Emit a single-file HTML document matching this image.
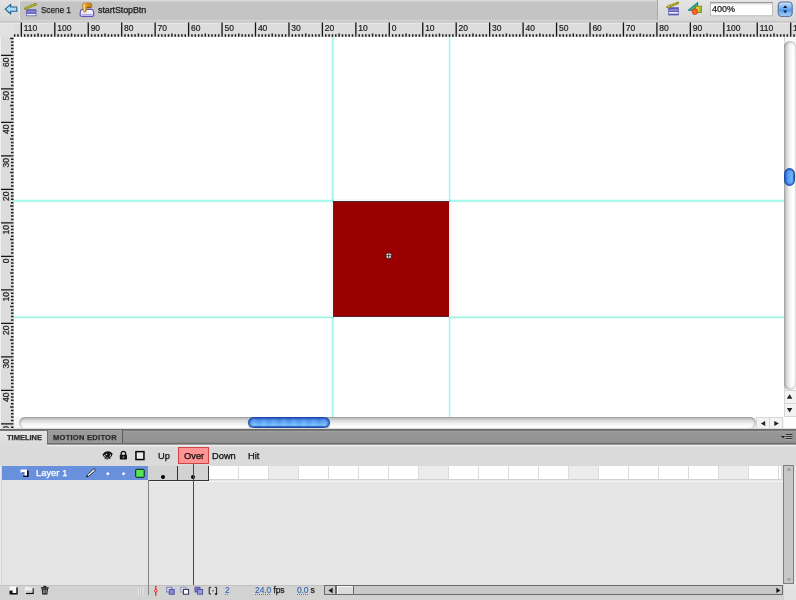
<!DOCTYPE html>
<html lang="en">
<head>
<meta charset="utf-8">
<title>startStopBtn</title>
<style>
html,body{margin:0;padding:0;}
body{width:796px;height:600px;overflow:hidden;position:relative;background:#e4e4e4;
  font-family:"Liberation Sans",sans-serif;font-size:9px;color:#1a1a1a;}
.abs{position:absolute;display:block;}
.t{position:absolute;white-space:nowrap;line-height:1;will-change:transform;-webkit-text-stroke:0.25px currentColor;}
.rl{stroke:#202020;stroke-width:0.2px;}
svg.wc{will-change:transform;}
/* top bar */
#topbar{left:0;top:0;width:796px;height:22.6px;background:linear-gradient(#e2e2e2 0,#c4c4c4 2.4px,#c4c4c4 100%);}
#tb-left{left:0;top:0;width:20px;height:20px;background:linear-gradient(#e2e2e2,#d6d6d6);border-right:1px solid #e6e6e6;box-sizing:border-box;}
#tb-right{left:657px;top:0;width:139px;height:20px;background:linear-gradient(#e4e4e4,#d8d8d8);border-left:1px solid #a8a8a8;box-sizing:border-box;}
#tb-line{left:0;top:20px;width:796px;height:4px;background:linear-gradient(#d7d7d7 0,#d7d7d7 1px,#c6c6c6 1px,#c6c6c6 2px,#d0d0d0 2px,#d0d0d0 3px,#e6e6e6 3px,#e6e6e6 4px);}
/* rulers */
#rtop{left:0;top:24px;width:796px;height:12.7px;background:#dddddd;}
#rcorner{left:0;top:24px;width:13.5px;height:12.7px;background:#e2e2e2;}
#rleft{left:0;top:36.7px;width:13.5px;height:392.6px;background:#dcdcdc;border-left:1px solid #f0f0f0;box-sizing:border-box;}
/* stage */
#stage{left:13.5px;top:36.7px;width:770.5px;height:380.3px;background:#fff;}
.guide{background:#74f4ea;}
#sq{left:334px;top:202px;width:114.5px;height:113.8px;background:#9b0000;border-top:1px solid #8c0808;box-sizing:border-box;}
/* stage scrollbars */
#vsb{left:783.7px;top:36.7px;width:12.3px;height:380.3px;background:#f8f8f8;border-left:1px solid #d4d4d4;box-sizing:border-box;}
#vtrack{left:783.9px;top:41.3px;width:12.1px;height:348.4px;border-radius:6px;
  background:linear-gradient(90deg,#bababa 0%,#b8b8b8 5%,#dcdcdc 27%,#f3f3f3 48%,#fefefe 68%,#ffffff 85%,#f2f2f2 100%);box-shadow:inset 0 1.5px 2px rgba(0,0,0,.22),inset 0 -1.5px 2px rgba(0,0,0,.18);}
#vthumb{left:783.9px;top:167.7px;width:11.2px;height:18.6px;border-radius:5.6px;border:1px solid #1c48aa;box-sizing:border-box;
  background:linear-gradient(90deg,#3c78dc 0%,#5aa0f2 40%,#62acf6 60%,#7cc2fc 85%,#5a9cec 100%);box-shadow:inset 0 0 1.6px 0.9px #2456bc;}
.abox{background:#f3f3f3;box-sizing:border-box;}
#hsb{left:13.5px;top:417px;width:770.5px;height:11.6px;background:#f6f6f6;}
#htrack{left:18.8px;top:416.9px;width:737.2px;height:11.7px;border-radius:6px;
  background:linear-gradient(180deg,#b8b8b8 0%,#b6b6b6 6%,#d8d8d8 27%,#f0f0f0 54%,#fefefe 80%,#ffffff 100%);box-shadow:inset 1.5px 0 2px rgba(0,0,0,.2),inset -1.5px 0 2px rgba(0,0,0,.2);}
#hthumb{left:247.8px;top:416.9px;width:82px;height:11.6px;border-radius:5.8px;border:1px solid #1c48aa;box-sizing:border-box;
  background:repeating-linear-gradient(90deg,rgba(255,255,255,0) 0,rgba(255,255,255,.16) 5px,rgba(255,255,255,0) 10px),linear-gradient(180deg,#3c78dc 0%,#4c92ee 35%,#5aaaf6 60%,#88ceff 88%,#62acf4 100%);box-shadow:inset 0 0 1.6px 0.9px #2456bc,0 1px 1px rgba(60,60,60,.55);}
#corner{left:784px;top:417px;width:12px;height:12px;background:#fff;}
/* timeline */
#tl-dark{left:0;top:428px;width:796px;height:19px;background:linear-gradient(180deg,#dcdcdc 0px,#dcdcdc 1px,#6c6c6c 1px,#6c6c6c 2px,#777777 2px,#777777 3px,#9f9f9f 3px,#9f9f9f 4px,#979797 4px,#979797 5px,#979797 5px,#979797 6px,#979797 6px,#979797 7px,#959595 7px,#959595 8px,#959595 8px,#959595 9px,#959595 9px,#959595 10px,#959595 10px,#959595 11px,#939393 11px,#939393 12px,#939393 12px,#939393 13px,#939393 13px,#939393 14px,#8a8a8a 14px,#8a8a8a 15px,#6e6e6e 15px,#6e6e6e 16px,#9c9c9c 16px,#9c9c9c 17px,#efefef 17px,#efefef 18px,#e2e2e2 18px,#e2e2e2 19px);}
#tabbar{display:none;}
#tab1{left:0;top:431px;width:47px;height:16px;background:linear-gradient(#e4e4e4,#dadada);}
#tab2{left:47px;top:430px;width:76px;height:13.4px;background:linear-gradient(#a2a2a2 0,#a2a2a2 1px,#9b9b9b 1px,#999999 100%);border-right:1px solid #5c5c5c;border-left:1px solid #6e6e6e;box-sizing:border-box;}
#tl-head{left:0;top:447px;width:796px;height:18.8px;background:#dadada;}
#tl-body{left:0;top:465.8px;width:796px;height:119.2px;background:#e6e6e6;}
#tl-layers{left:0;top:465.8px;width:148.2px;height:119.2px;background:#e5e5e5;border-left:1px solid #e9e9e9;box-shadow:inset 1px 0 0 #d6d6d6;box-sizing:border-box;}
#tl-sep{left:148.1px;top:480px;width:1px;height:115.3px;background:#848484;}
#layer{left:2.2px;top:465.5px;width:146.1px;height:14.5px;background:#6990dd;}
#tl-foot{left:0;top:585px;width:796px;height:15px;background:#d2d2d2;border-top:1px solid #c2c2c2;box-sizing:border-box;}
.cell{top:465.6px;height:14.7px;background:#fff;border-right:1px solid #dcdcdc;border-bottom:1px solid #d0d0d0;box-sizing:border-box;}
.cell.sh{background:#ececec;}
.kf{top:465.8px;height:15.2px;background:#d2d2d2;border:1px solid #333;border-top:none;box-sizing:border-box;}
.dot{width:4.2px;height:4.2px;border-radius:50%;background:#000;}
#over{left:178.1px;top:447.3px;width:30.7px;height:16.8px;background:#ff9494;border:1px solid #d24444;box-sizing:border-box;}
#playhead{left:192.9px;top:464px;width:1.1px;height:121px;background:#cc1010;}
#tvsb{left:783.3px;top:465.2px;width:11px;height:119.2px;background:#c7c7c7;border:1.1px solid #7e7e7e;box-sizing:border-box;}
#thsb{left:324.3px;top:585.2px;width:459.2px;height:10.3px;background:#c9c9c9;border:1px solid #6a6a6a;box-sizing:border-box;}
#thsb-l{left:324.3px;top:585.2px;width:12.2px;height:10.3px;background:#c9c9c9;border:1px solid #6a6a6a;box-sizing:border-box;}
.blue{color:#2f66b0;-webkit-text-stroke:0.1px #2f66b0;text-decoration:underline dotted #4a7cc0;text-decoration-thickness:0.8px;text-underline-offset:1.2px;}
</style>
</head>
<body>
<!-- top bar -->
<div id="topbar" class="abs"></div>
<div id="tb-left" class="abs"></div>
<div id="tb-right" class="abs"></div>
<div id="tb-line" class="abs"></div>
<svg class="abs" style="left:0;top:0" width="160" height="20" viewBox="0 0 160 20">
  <!-- back arrow -->
  <path d="M5.2 9.1L10.7 4.3V7H16.8V11.3H10.7V14L5.2 9.1Z" fill="#a6dcf8" stroke="#1d5f92" stroke-width="1.1" stroke-linejoin="round"/>
  <!-- clapper -->
  <g id="clap">
    <rect x="26.2" y="9.3" width="10.2" height="6.9" fill="#5c5ab6"/>
    <rect x="27.3" y="10.8" width="8" height="1.7" fill="#8e8cd6"/>
    <rect x="26.9" y="13.9" width="8.8" height="1.5" fill="#f4f4ff"/>
    <path d="M25.4 8.6L35.6 4.3" stroke="#8e8e1c" stroke-width="2.7" stroke-linecap="round"/>
    <path d="M25.8 8.3L35.3 4.3" stroke="#cfcf4a" stroke-width="1.2" stroke-dasharray="1.8 1.3"/>
  </g>
  <!-- button symbol icon -->
  <path d="M82.4 9.4H91.4Q93.2 9.4 93.5 11.4L93.8 14.2Q93.8 16.4 91.6 16.4H82.2Q80 16.4 80.1 14.2L80.4 11.4Q80.7 9.4 82.4 9.4Z" fill="#f3f0ff" stroke="#5e56b8" stroke-width="1.2"/>
  <path d="M81.5 14.6H92.5" stroke="#b7a8ee" stroke-width="1.6"/>
  <defs><linearGradient id="hnd" x1="0" y1="0" x2="1" y2="0.4"><stop offset="0" stop-color="#f6cf58"/><stop offset="0.5" stop-color="#e2a028"/><stop offset="1" stop-color="#bf7a18"/></linearGradient></defs>
  <path d="M84.2 3L85.6 2.7L86.6 3.3L87.8 2.7L89 3.3L90.4 2.8Q91.8 3 91.8 4.6V6.2Q91.8 7.8 90.2 7.8H86.6L86.3 11.2L84.6 12.5L83.1 10.9L82.4 5Q82.4 3.4 84.2 3Z" fill="url(#hnd)" stroke="#9c5c12" stroke-width="0.55"/>
  <path d="M86.8 7.3H91" stroke="#8a480c" stroke-width="1"/>
  <path d="M84 4.4L84.6 10.6" stroke="#fbe694" stroke-width="0.9"/>
  <path d="M86.7 3.6V5.4M88.9 3.6V5.4" stroke="#a86414" stroke-width="0.5"/>
</svg>
<span class="t" id="txScene" style="left:41.2px;top:6.2px;font-size:9px;transform:scaleX(0.905);transform-origin:0 0">Scene 1</span>
<span class="t" id="txBtn" style="left:98.2px;top:6.2px;font-size:9px;letter-spacing:-0.12px">startStopBtn</span>
<svg class="abs" style="left:660px;top:0" width="136" height="20" viewBox="660 0 136 20">
  <!-- clapper 2 -->
  <rect x="668.2" y="7.2" width="10.6" height="8.2" fill="#5c5ab6"/>
  <rect x="669.3" y="9.2" width="8.4" height="1.8" fill="#8e8cd6"/>
  <rect x="668.9" y="12" width="9.2" height="1.6" fill="#f4f4ff"/>
  <path d="M667.6 6.9L677.7 2.9" stroke="#8e8e1c" stroke-width="2.7" stroke-linecap="round"/>
  <path d="M668 6.6L677.4 2.9" stroke="#cfcf4a" stroke-width="1.2" stroke-dasharray="1.8 1.3"/>
  <!-- symbols icon -->
  <path d="M688.4 10.2L697.6 2.6V10.6Z" fill="#3cb878" stroke="#1f8484" stroke-width="1.1" stroke-linejoin="round"/>
  <rect x="695.6" y="6.2" width="6" height="6.3" fill="#e2d02a" stroke="#9a6a14" stroke-width="0.8"/>
  <rect x="699.2" y="6.8" width="2" height="5.2" fill="#8cc63c"/>
  <circle cx="694.9" cy="11.6" r="2.8" fill="#f2682a" stroke="#c2361a" stroke-width="0.8"/>
  <!-- zoom field -->
  <rect x="710.6" y="2.8" width="62" height="13" fill="#fff" stroke="#b4b4b4" stroke-width="0.9"/>
  <path d="M710.3 2.7H772.9" stroke="#8e8e8e" stroke-width="1"/><path d="M711 3.8H772.2" stroke="#dcdcdc" stroke-width="1.2"/>
  <!-- stepper -->
  <defs><linearGradient id="stp" x1="0" y1="0" x2="0" y2="1"><stop offset="0" stop-color="#d2e6fb"/><stop offset="0.45" stop-color="#72acf1"/><stop offset="0.55" stop-color="#5598ea"/><stop offset="1" stop-color="#acd8fc"/></linearGradient></defs>
  <rect x="778.2" y="2" width="14" height="14.4" rx="3" fill="url(#stp)" stroke="#4a5e86" stroke-width="0.9"/>
  <path d="M783.1 8L785.2 5.2L787.3 8ZM783.1 10.4L785.2 13.2L787.3 10.4Z" fill="#0c1c3c"/>
</svg>
<span class="t" id="txZoom" style="left:712.2px;top:4.5px;font-size:9px">400%</span>


<!-- rulers -->
<div id="rtop" class="abs"></div>
<div id="rleft" class="abs"></div>
<div id="rcorner" class="abs"></div>

<!-- stage -->
<div id="stage" class="abs"></div>
<div class="abs" style="left:13.5px;top:199px;width:770.5px;height:4px;background:linear-gradient(180deg,#eafdfa 0px,#eafdfa 1px,#a6f8ea 1px,#a6f8ea 2px,#aefaee 2px,#aefaee 3px,#f2fffc 3px,#f2fffc 4px)"></div>
<div class="abs" style="left:13.5px;top:315px;width:770.5px;height:4px;background:linear-gradient(180deg,#f2fdfc 0px,#f2fdfc 1px,#c6fbf0 1px,#c6fbf0 2px,#a6f0e0 2px,#a6f0e0 3px,#eefcf8 3px,#eefcf8 4px)"></div>
<div class="abs" style="mix-blend-mode:multiply;left:331px;top:36.7px;width:4px;height:380.3px;background:linear-gradient(90deg,#e8fbfb 0px,#e8fbfb 1px,#acf0ec 1px,#acf0ec 2px,#b8fdfb 2px,#b8fdfb 3px,#f2ffff 3px,#f2ffff 4px)"></div>
<div class="abs" style="mix-blend-mode:multiply;left:448px;top:36.7px;width:4px;height:380.3px;background:linear-gradient(90deg,#effefe 0px,#effefe 1px,#b2ecec 1px,#b2ecec 2px,#dcfdfd 2px,#dcfdfd 3px,#f8ffff 3px,#f8ffff 4px)"></div>
<div class="abs" style="left:334px;top:199px;width:115px;height:2px;background:#f3f9fd"></div>
<div class="abs" style="left:334px;top:316.6px;width:115px;height:2.4px;background:#f3fbfb"></div>
<div class="abs" style="left:331px;top:202px;width:2px;height:114.6px;background:#f1f8fd"></div>
<div class="abs" style="left:449.4px;top:202px;width:2.6px;height:114.6px;background:#f6f6fa"></div>
<div class="abs" style="left:333px;top:201px;width:116.4px;height:115.6px;background:#54282e"></div>
<div id="sq" class="abs"></div>
<svg class="abs" style="left:383px;top:250px" width="12" height="12" viewBox="0 0 12 12">
  <circle cx="5.75" cy="5.75" r="3" fill="#fff" stroke="#300404" stroke-width="0.8"/>
  <path d="M5.75 3v5.5M3 5.75h5.5" stroke="#000" stroke-width="0.75" fill="none"/>
</svg>
<svg class="abs wc" style="left:0;top:21px" width="796" height="16" viewBox="0 0 796 16">
<path d="M14.66 13.20v2.50M18.00 13.20v2.50M24.69 13.20v2.50M28.04 13.20v2.50M31.38 13.20v2.50M34.73 13.20v2.50M38.07 12.40v3.30M41.42 13.20v2.50M44.76 13.20v2.50M48.11 13.20v2.50M51.45 13.20v2.50M58.14 13.20v2.50M61.49 13.20v2.50M64.83 13.20v2.50M68.18 13.20v2.50M71.52 12.40v3.30M74.87 13.20v2.50M78.21 13.20v2.50M81.56 13.20v2.50M84.90 13.20v2.50M91.59 13.20v2.50M94.94 13.20v2.50M98.29 13.20v2.50M101.63 13.20v2.50M104.97 12.40v3.30M108.32 13.20v2.50M111.66 13.20v2.50M115.01 13.20v2.50M118.35 13.20v2.50M125.05 13.20v2.50M128.39 13.20v2.50M131.74 13.20v2.50M135.08 13.20v2.50M138.43 12.40v3.30M141.77 13.20v2.50M145.11 13.20v2.50M148.46 13.20v2.50M151.80 13.20v2.50M158.50 13.20v2.50M161.84 13.20v2.50M165.19 13.20v2.50M168.53 13.20v2.50M171.88 12.40v3.30M175.22 13.20v2.50M178.56 13.20v2.50M181.91 13.20v2.50M185.25 13.20v2.50M191.94 13.20v2.50M195.29 13.20v2.50M198.63 13.20v2.50M201.98 13.20v2.50M205.32 12.40v3.30M208.67 13.20v2.50M212.01 13.20v2.50M215.36 13.20v2.50M218.71 13.20v2.50M225.39 13.20v2.50M228.74 13.20v2.50M232.09 13.20v2.50M235.43 13.20v2.50M238.77 12.40v3.30M242.12 13.20v2.50M245.47 13.20v2.50M248.81 13.20v2.50M252.16 13.20v2.50M258.85 13.20v2.50M262.19 13.20v2.50M265.53 13.20v2.50M268.88 13.20v2.50M272.23 12.40v3.30M275.57 13.20v2.50M278.91 13.20v2.50M282.26 13.20v2.50M285.61 13.20v2.50M292.30 13.20v2.50M295.64 13.20v2.50M298.99 13.20v2.50M302.33 13.20v2.50M305.68 12.40v3.30M309.02 13.20v2.50M312.37 13.20v2.50M315.71 13.20v2.50M319.06 13.20v2.50M325.75 13.20v2.50M329.09 13.20v2.50M332.44 13.20v2.50M335.78 13.20v2.50M339.12 12.40v3.30M342.47 13.20v2.50M345.81 13.20v2.50M349.16 13.20v2.50M352.50 13.20v2.50M359.19 13.20v2.50M362.54 13.20v2.50M365.88 13.20v2.50M369.23 13.20v2.50M372.57 12.40v3.30M375.92 13.20v2.50M379.26 13.20v2.50M382.61 13.20v2.50M385.95 13.20v2.50M392.65 13.20v2.50M395.99 13.20v2.50M399.34 13.20v2.50M402.68 13.20v2.50M406.03 12.40v3.30M409.37 13.20v2.50M412.72 13.20v2.50M416.06 13.20v2.50M419.41 13.20v2.50M426.10 13.20v2.50M429.44 13.20v2.50M432.79 13.20v2.50M436.13 13.20v2.50M439.48 12.40v3.30M442.82 13.20v2.50M446.17 13.20v2.50M449.51 13.20v2.50M452.86 13.20v2.50M459.55 13.20v2.50M462.89 13.20v2.50M466.24 13.20v2.50M469.58 13.20v2.50M472.93 12.40v3.30M476.27 13.20v2.50M479.62 13.20v2.50M482.96 13.20v2.50M486.31 13.20v2.50M493.00 13.20v2.50M496.34 13.20v2.50M499.69 13.20v2.50M503.03 13.20v2.50M506.38 12.40v3.30M509.72 13.20v2.50M513.07 13.20v2.50M516.41 13.20v2.50M519.75 13.20v2.50M526.45 13.20v2.50M529.79 13.20v2.50M533.13 13.20v2.50M536.48 13.20v2.50M539.83 12.40v3.30M543.17 13.20v2.50M546.51 13.20v2.50M549.86 13.20v2.50M553.21 13.20v2.50M559.89 13.20v2.50M563.24 13.20v2.50M566.59 13.20v2.50M569.93 13.20v2.50M573.28 12.40v3.30M576.62 13.20v2.50M579.97 13.20v2.50M583.31 13.20v2.50M586.65 13.20v2.50M593.35 13.20v2.50M596.69 13.20v2.50M600.04 13.20v2.50M603.38 13.20v2.50M606.73 12.40v3.30M610.07 13.20v2.50M613.41 13.20v2.50M616.76 13.20v2.50M620.11 13.20v2.50M626.80 13.20v2.50M630.14 13.20v2.50M633.49 13.20v2.50M636.83 13.20v2.50M640.17 12.40v3.30M643.52 13.20v2.50M646.87 13.20v2.50M650.21 13.20v2.50M653.56 13.20v2.50M660.25 13.20v2.50M663.59 13.20v2.50M666.94 13.20v2.50M670.28 13.20v2.50M673.62 12.40v3.30M676.97 13.20v2.50M680.32 13.20v2.50M683.66 13.20v2.50M687.01 13.20v2.50M693.70 13.20v2.50M697.04 13.20v2.50M700.38 13.20v2.50M703.73 13.20v2.50M707.08 12.40v3.30M710.42 13.20v2.50M713.77 13.20v2.50M717.11 13.20v2.50M720.46 13.20v2.50M727.14 13.20v2.50M730.49 13.20v2.50M733.84 13.20v2.50M737.18 13.20v2.50M740.53 12.40v3.30M743.87 13.20v2.50M747.22 13.20v2.50M750.56 13.20v2.50M753.90 13.20v2.50M760.60 13.20v2.50M763.94 13.20v2.50M767.29 13.20v2.50M770.63 13.20v2.50M773.98 12.40v3.30M777.32 13.20v2.50M780.67 13.20v2.50M784.01 13.20v2.50M787.36 13.20v2.50M794.05 13.20v2.50" stroke="#1c1c1c" stroke-width="1.5" fill="none"/>
<path d="M21.35 1.6V15.7M54.80 1.6V15.7M88.25 1.6V15.7M121.70 1.6V15.7M155.15 1.6V15.7M188.60 1.6V15.7M222.05 1.6V15.7M255.50 1.6V15.7M288.95 1.6V15.7M322.40 1.6V15.7M355.85 1.6V15.7M389.30 1.6V15.7M422.75 1.6V15.7M456.20 1.6V15.7M489.65 1.6V15.7M523.10 1.6V15.7M556.55 1.6V15.7M590.00 1.6V15.7M623.45 1.6V15.7M656.90 1.6V15.7M690.35 1.6V15.7M723.80 1.6V15.7M757.25 1.6V15.7M790.70 1.6V15.7" stroke="#141414" stroke-width="1.3" fill="none"/>
<g font-family="'Liberation Sans',sans-serif" font-size="8.5" fill="#202020" class="rl"><text x="23.75" y="10.1">110</text><text x="57.20" y="10.1">100</text><text x="90.65" y="10.1">90</text><text x="124.10" y="10.1">80</text><text x="157.55" y="10.1">70</text><text x="191.00" y="10.1">60</text><text x="224.45" y="10.1">50</text><text x="257.90" y="10.1">40</text><text x="291.35" y="10.1">30</text><text x="324.80" y="10.1">20</text><text x="358.25" y="10.1">10</text><text x="391.70" y="10.1">0</text><text x="425.15" y="10.1">10</text><text x="458.60" y="10.1">20</text><text x="492.05" y="10.1">30</text><text x="525.50" y="10.1">40</text><text x="558.95" y="10.1">50</text><text x="592.40" y="10.1">60</text><text x="625.85" y="10.1">70</text><text x="659.30" y="10.1">80</text><text x="692.75" y="10.1">90</text><text x="726.20" y="10.1">100</text><text x="759.65" y="10.1">110</text><text x="793.10" y="10.1">120</text></g>
</svg>
<svg class="abs wc" style="left:0;top:36px" width="14" height="394" viewBox="0 0 14 394">
<path d="M10.20 2.55h3.30M11.00 5.90h2.50M11.00 9.25h2.50M11.00 12.60h2.50M11.00 15.95h2.50M11.00 22.65h2.50M11.00 26.00h2.50M11.00 29.35h2.50M11.00 32.70h2.50M10.20 36.05h3.30M11.00 39.40h2.50M11.00 42.75h2.50M11.00 46.10h2.50M11.00 49.45h2.50M11.00 56.15h2.50M11.00 59.50h2.50M11.00 62.85h2.50M11.00 66.20h2.50M10.20 69.55h3.30M11.00 72.90h2.50M11.00 76.25h2.50M11.00 79.60h2.50M11.00 82.95h2.50M11.00 89.65h2.50M11.00 93.00h2.50M11.00 96.35h2.50M11.00 99.70h2.50M10.20 103.05h3.30M11.00 106.40h2.50M11.00 109.75h2.50M11.00 113.10h2.50M11.00 116.45h2.50M11.00 123.15h2.50M11.00 126.50h2.50M11.00 129.85h2.50M11.00 133.20h2.50M10.20 136.55h3.30M11.00 139.90h2.50M11.00 143.25h2.50M11.00 146.60h2.50M11.00 149.95h2.50M11.00 156.65h2.50M11.00 160.00h2.50M11.00 163.35h2.50M11.00 166.70h2.50M10.20 170.05h3.30M11.00 173.40h2.50M11.00 176.75h2.50M11.00 180.10h2.50M11.00 183.45h2.50M11.00 190.15h2.50M11.00 193.50h2.50M11.00 196.85h2.50M11.00 200.20h2.50M10.20 203.55h3.30M11.00 206.90h2.50M11.00 210.25h2.50M11.00 213.60h2.50M11.00 216.95h2.50M11.00 223.65h2.50M11.00 227.00h2.50M11.00 230.35h2.50M11.00 233.70h2.50M10.20 237.05h3.30M11.00 240.40h2.50M11.00 243.75h2.50M11.00 247.10h2.50M11.00 250.45h2.50M11.00 257.15h2.50M11.00 260.50h2.50M11.00 263.85h2.50M11.00 267.20h2.50M10.20 270.55h3.30M11.00 273.90h2.50M11.00 277.25h2.50M11.00 280.60h2.50M11.00 283.95h2.50M11.00 290.65h2.50M11.00 294.00h2.50M11.00 297.35h2.50M11.00 300.70h2.50M10.20 304.05h3.30M11.00 307.40h2.50M11.00 310.75h2.50M11.00 314.10h2.50M11.00 317.45h2.50M11.00 324.15h2.50M11.00 327.50h2.50M11.00 330.85h2.50M11.00 334.20h2.50M10.20 337.55h3.30M11.00 340.90h2.50M11.00 344.25h2.50M11.00 347.60h2.50M11.00 350.95h2.50M11.00 357.65h2.50M11.00 361.00h2.50M11.00 364.35h2.50M11.00 367.70h2.50M10.20 371.05h3.30M11.00 374.40h2.50M11.00 377.75h2.50M11.00 381.10h2.50M11.00 384.45h2.50M11.00 391.15h2.50" stroke="#1c1c1c" stroke-width="1.5" fill="none"/>
<path d="M1 19.30H13.5M1 52.80H13.5M1 86.30H13.5M1 119.80H13.5M1 153.30H13.5M1 186.80H13.5M1 220.30H13.5M1 253.80H13.5M1 287.30H13.5M1 320.80H13.5M1 354.30H13.5M1 387.80H13.5" stroke="#141414" stroke-width="1.3" fill="none"/>
<g font-family="'Liberation Sans',sans-serif" font-size="8.5" fill="#202020" class="rl"><text transform="translate(9.2 21.60) rotate(-90)" text-anchor="end" x="0" y="0">60</text><text transform="translate(9.2 55.10) rotate(-90)" text-anchor="end" x="0" y="0">50</text><text transform="translate(9.2 88.60) rotate(-90)" text-anchor="end" x="0" y="0">40</text><text transform="translate(9.2 122.10) rotate(-90)" text-anchor="end" x="0" y="0">30</text><text transform="translate(9.2 155.60) rotate(-90)" text-anchor="end" x="0" y="0">20</text><text transform="translate(9.2 189.10) rotate(-90)" text-anchor="end" x="0" y="0">10</text><text transform="translate(9.2 222.60) rotate(-90)" text-anchor="end" x="0" y="0">0</text><text transform="translate(9.2 256.10) rotate(-90)" text-anchor="end" x="0" y="0">10</text><text transform="translate(9.2 289.60) rotate(-90)" text-anchor="end" x="0" y="0">20</text><text transform="translate(9.2 323.10) rotate(-90)" text-anchor="end" x="0" y="0">30</text><text transform="translate(9.2 356.60) rotate(-90)" text-anchor="end" x="0" y="0">40</text><text transform="translate(9.2 390.10) rotate(-90)" text-anchor="end" x="0" y="0">50</text></g>
</svg>

<!-- stage scrollbars -->
<div id="vsb" class="abs"></div>
<div id="vtrack" class="abs"></div>
<div id="vthumb" class="abs"></div>
<div id="hsb" class="abs"></div>
<div id="htrack" class="abs"></div>
<div id="hthumb" class="abs"></div>
<div id="corner" class="abs"></div>
<div class="abs abox" style="left:784px;top:390px;width:12px;height:14.2px;border:1px solid #d6d6d6;border-right:none;"></div>
<div class="abs abox" style="left:784px;top:404.2px;width:12px;height:12.8px;border:1px solid #d6d6d6;border-right:none;border-top:none"></div>
<div class="abs abox" style="left:756.2px;top:417px;width:14px;height:11.6px;border:1px solid #d6d6d6;border-bottom:none"></div>
<div class="abs abox" style="left:770.2px;top:417px;width:13px;height:11.6px;border:1px solid #d6d6d6;border-left:none;border-bottom:none"></div>
<svg class="abs" style="left:750px;top:386px" width="46" height="44" viewBox="750 386 46 44">
  <path d="M786.8 398.8H792.4L789.6 394.2Z" fill="#222"/>
  <path d="M786.8 408H792.4L789.6 412.5Z" fill="#222"/>
  <path d="M765.2 420.9V425.9L760.8 423.4Z" fill="#222"/>
  <path d="M774.3 420.9V425.9L778.9 423.4Z" fill="#222"/>
</svg>


<!-- timeline -->
<div id="tl-dark" class="abs"></div>
<div id="tabbar" class="abs"></div>
<div id="tab2" class="abs"></div>
<div id="tab1" class="abs"></div>
<div id="tl-head" class="abs"></div>
<div id="tl-body" class="abs"></div>
<div id="tl-layers" class="abs"></div>
<div id="layer" class="abs"></div>
<div class="abs" style="left:149px;top:481px;width:634px;height:1.2px;background:#f4f4f4"></div>
<div class="abs cell" style="left:208.56px;width:30.03px"></div>
<div class="abs cell" style="left:238.59px;width:30.03px"></div>
<div class="abs cell sh" style="left:268.62px;width:30.03px"></div>
<div class="abs cell" style="left:298.65px;width:30.03px"></div>
<div class="abs cell" style="left:328.68px;width:30.03px"></div>
<div class="abs cell" style="left:358.71px;width:30.03px"></div>
<div class="abs cell" style="left:388.74px;width:30.03px"></div>
<div class="abs cell sh" style="left:418.77px;width:30.03px"></div>
<div class="abs cell" style="left:448.80px;width:30.03px"></div>
<div class="abs cell" style="left:478.83px;width:30.03px"></div>
<div class="abs cell" style="left:508.86px;width:30.03px"></div>
<div class="abs cell" style="left:538.89px;width:30.03px"></div>
<div class="abs cell sh" style="left:568.92px;width:30.03px"></div>
<div class="abs cell" style="left:598.95px;width:30.03px"></div>
<div class="abs cell" style="left:628.98px;width:30.03px"></div>
<div class="abs cell" style="left:659.01px;width:30.03px"></div>
<div class="abs cell" style="left:689.04px;width:30.03px"></div>
<div class="abs cell sh" style="left:719.07px;width:30.03px"></div>
<div class="abs cell" style="left:749.10px;width:30.03px"></div>
<div class="abs cell" style="left:779.13px;width:3.37px"></div>
<div class="abs kf" style="left:148.3px;width:30.2px;border-left:none"></div>
<div class="abs kf" style="left:178.4px;width:30.4px;border-left:none"></div>
<div class="abs dot" style="left:161.1px;top:474.6px"></div>
<div class="abs dot" style="left:191.3px;top:474.6px"></div>
<div id="over" class="abs"></div>
<div id="tl-foot" class="abs"></div>
<div id="tl-sep" class="abs"></div>
<div class="abs" style="left:783.6px;top:585px;width:12.4px;height:15px;background:#e2e2e2"></div>
<div class="abs" style="left:794.3px;top:465.3px;width:1.7px;height:120px;background:#e6e6e6"></div>
<div id="playhead" class="abs"></div>
<div id="tvsb" class="abs"></div>
<div id="thsb" class="abs"></div>
<div id="thsb-l" class="abs"></div>
<div class="abs" style="left:335.5px;top:585.2px;width:18.4px;height:10.3px;background:#dbdbdb;border:1px solid #6a6a6a;box-shadow:inset 1px 1px 0 #f8f8f8;box-sizing:border-box"></div>
<span class="t" id="txTL" style="left:6.9px;top:434px;font-size:7.5px;font-weight:bold;color:#2c2c2c">TIMELINE</span>
<span class="t" id="txME" style="left:52.7px;top:434px;font-size:7.5px;letter-spacing:0.28px;font-weight:bold;color:#2a2a2a">MOTION EDITOR</span>
<svg class="abs" style="left:776px;top:431px" width="20" height="12" viewBox="776 431 20 12">
  <path d="M780.9 435.9H785.1L783 438.3Z" fill="#1e1e1e"/>
  <path d="M785.8 434.5H792.4M785.8 436.5H792.4M785.8 438.6H792.4" stroke="#2c2c2c" stroke-width="1.1"/>
  <path d="M785.8 435.5H792.4M785.8 437.55H792.4M785.8 439.7H792.4" stroke="#b4b4b4" stroke-width="0.9"/>
</svg>
<!-- header icons -->
<svg class="abs" style="left:100px;top:446px" width="50" height="18" viewBox="100 446 50 18">
  <!-- eye -->
  <path d="M103.1 455.2Q107.6 450.4 112.1 454.6Q110.8 458.4 107.2 458.2Q104.4 457.8 103.1 455.2Z" fill="#c8c8c8" stroke="#141414" stroke-width="1"/>
  <path d="M103.1 455Q107.6 449.8 112.1 454.4" stroke="#141414" stroke-width="1.9" fill="none"/>
  <ellipse cx="107.6" cy="455.1" rx="2.5" ry="2.3" fill="#141414"/>
  <circle cx="106.5" cy="454.4" r="0.65" fill="#e8e8e8"/>
  <path d="M104.4 458.4Q107.6 460 110.8 458" stroke="#2a2a2a" stroke-width="0.8" fill="none"/>
  <!-- lock -->
  <path d="M121.2 455V453.6Q121.2 451.4 123.4 451.4Q125.6 451.4 125.6 453.6V455" stroke="#111" stroke-width="1.3" fill="none"/>
  <rect x="119.8" y="454.8" width="7.2" height="4.6" rx="0.6" fill="#111"/>
  <rect x="122.5" y="456.2" width="1.8" height="2" fill="#777"/>
  <!-- outline square -->
  <rect x="135.95" y="451.65" width="8" height="7.9" fill="#ebebeb" stroke="#000" stroke-width="1.5"/>
</svg>
<span class="t" id="txUp" style="color:#0c0c0c;left:157.9px;top:451.6px;font-size:9.3px">Up</span>
<span class="t" id="txOver" style="color:#0c0c0c;left:183.7px;top:451.6px;font-size:9.3px">Over</span>
<span class="t" id="txDown" style="color:#0c0c0c;left:211.9px;top:451.6px;font-size:9.3px">Down</span>
<span class="t" id="txHit" style="color:#0c0c0c;left:247.7px;top:451.6px;font-size:9.3px">Hit</span>
<!-- layer row -->
<svg class="abs" style="left:18px;top:466px" width="132" height="14" viewBox="18 466 132 14">
  <!-- layer icon -->
  <path d="M27 470.6H28.7V477H23.2V475.5H27Z" fill="#0a0a14"/>
  <path d="M20.6 469.6H27V475.5H24.5V472.5H20.6Z" fill="#fff"/>
  <path d="M22 472.5H24.5V473.4H22Z" fill="#26304c"/>
  <!-- pencil -->
  <path d="M86.4 476.9L87.6 474.6L93.4 469.2Q94.4 468.6 95 469.4Q95.6 470.2 94.8 471L88.8 476.2Z" fill="#fff" stroke="#10182c" stroke-width="0.9" stroke-linejoin="round"/>
  <path d="M86.3 477L87.3 475.2L88.4 476.2Z" fill="#10182c"/>
  <!-- diamonds -->
  <path d="M107.8 471.9L109.6 473.7L107.8 475.5L106 473.7Z" fill="#fff"/>
  <path d="M123.6 471.9L125.4 473.7L123.6 475.5L121.8 473.7Z" fill="#fff"/>
  <!-- green square -->
  <rect x="135.7" y="469.3" width="8.5" height="8" rx="0.8" fill="#54e654" stroke="#0e200e" stroke-width="1"/>
</svg>
<span class="t" id="txLayer" style="left:35.6px;top:469px;font-size:9.2px;color:#fff;letter-spacing:0.1px">Layer 1</span>
<!-- footer icons -->
<svg class="abs" style="left:0;top:585px" width="240" height="15" viewBox="0 585 240 15">
  <!-- new layer -->
  <path d="M10.8 587.4H17.7V594.4H9.6V590.6H10.8Z" fill="#0a0a0a"/>
  <path d="M9.6 586.2H16.3V593H12.5V590.6H9.6Z" fill="#f8f8f8"/>
  <!-- folder -->
  <path d="M25.9 588.3H33.7V594.1H25.9Z" fill="#0a0a0a"/>
  <path d="M24.9 586.8H28.4L29 587.6H32.6V592.8H24.9Z" fill="#efefef"/>
  <path d="M25.4 590.6H32.1V592.3H25.4Z" fill="#cfcfcf"/>
  <!-- trash -->
  <path d="M41.6 588.6H48L47.4 594.6H42.2Z" fill="#161616"/>
  <path d="M40.9 587.2H48.7V588.4H40.9Z" fill="#161616"/>
  <path d="M43.4 585.9H46.2V587.2H43.4Z" fill="#161616"/>
  <path d="M43.3 589.6V593.4M44.8 589.6V593.4M46.3 589.6V593.4" stroke="#d8d8d8" stroke-width="0.7"/>
  <!-- grip -->
  <path d="M138.4 587.4V595.6M140.6 587.4V595.6M142.8 587.4V595.6" stroke="#eeeeee" stroke-width="1.1"/>
  <path d="M139.4 587.4V595.6M141.6 587.4V595.6" stroke="#bdbdbd" stroke-width="0.9"/>
  <!-- center frame marker -->
  <path d="M155.8 585.8V595.8" stroke="#e01818" stroke-width="1.1"/>
  <path d="M155.8 588.6L157.3 590.7L155.8 592.8L154.3 590.7Z" fill="#f4b0b0" stroke="#e01818" stroke-width="0.8"/>
  <!-- onion skin 1 -->
  <rect x="166.8" y="587.2" width="5" height="4.8" fill="#e8e8f8" stroke="#6a6ab8" stroke-width="0.9"/>
  <rect x="169.2" y="589.4" width="5" height="4.8" fill="#8a8acc" stroke="#4c4ca4" stroke-width="0.9"/>
  <!-- onion skin 2 -->
  <rect x="180.8" y="587.2" width="5" height="4.8" fill="#e0e0ee" stroke="#8a8ac4" stroke-width="0.9"/>
  <rect x="183.4" y="589.4" width="5.2" height="4.8" fill="#fff" stroke="#2a2a5c" stroke-width="1"/>
  <!-- onion skin 3 -->
  <rect x="195" y="587.2" width="5" height="4.8" fill="#7c7cc4" stroke="#4c4ca4" stroke-width="0.9"/>
  <rect x="197.6" y="589.4" width="5" height="4.8" fill="#9a9ad4" stroke="#4c4ca4" stroke-width="0.9"/>
  <!-- modify markers -->
  <path d="M211 587.4H209.2V594H211M214.8 587.4H216.6V594H214.8" stroke="#222" stroke-width="1" fill="none"/>
  <path d="M212.3 590.7H213.7M213 590V591.4" stroke="#444" stroke-width="0.7"/>
  <path d="M214.8 595.2H217.4L216.1 593.2Z" fill="#111" transform="rotate(180 216.1 594.4)"/>
</svg>
<span class="t blue" id="tx2" style="left:225px;top:586.3px;font-size:8.6px">2</span>
<span class="t" id="txFps" style="left:255.4px;top:586.3px;font-size:8.5px;letter-spacing:-0.1px"><span class="blue" style="position:static">24.0</span> fps</span>
<span class="t" id="txSec" style="left:296.5px;top:586.3px;font-size:8.5px;letter-spacing:-0.15px"><span class="blue" style="position:static">0.0</span> s</span>
<!-- timeline scrollbar arrows -->
<svg class="abs" style="left:320px;top:462px" width="476" height="138" viewBox="320 462 476 138">
  <path d="M332.6 587.8V593.2L328.4 590.5Z" fill="#111"/>
  <path d="M776.4 587.7V593.1L780.4 590.4Z" fill="#111"/>
  <path d="M786.6 470.4H791.4L789 467.6Z" fill="#9a9a9a"/>
  <path d="M786.6 578.4H791.4L789 581.2Z" fill="#9a9a9a"/>
</svg>

</body>
</html>
